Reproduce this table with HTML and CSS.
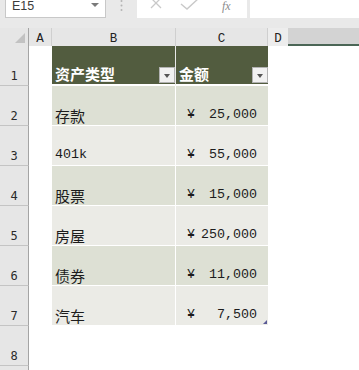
FILE: index.html
```html
<!DOCTYPE html>
<html lang="zh-CN">
<head>
<meta charset="utf-8">
<title>资产表</title>
<link rel="stylesheet" href="styles.css">
</head>
<body>
<div class="app">
  <div class="fbar">
    <div class="namebox">
      <span class="name">E15</span>
      <svg class="nb-arrow" width="8" height="5" viewBox="0 0 8 5"><path d="M0 0h8L4 4z" fill="#7a7a7a"/></svg>
    </div>
    <div class="grip">
      <svg width="3" height="14" viewBox="0 0 3 14"><circle cx="1.5" cy="2" r="1" fill="#b4b4b4"/><circle cx="1.5" cy="6.5" r="1" fill="#b4b4b4"/><circle cx="1.5" cy="11" r="1" fill="#b4b4b4"/></svg>
    </div>
    <div class="fbtns">
      <svg class="ic-x" width="12" height="12" viewBox="0 0 12 12"><path d="M1 1l10 10M11 1L1 11" stroke="#c9c9c9" stroke-width="1.3" fill="none"/></svg>
      <svg class="ic-ok" width="20" height="13" viewBox="0 0 20 13"><path d="M1 7l6 5L19 1" stroke="#c9c9c9" stroke-width="1.4" fill="none"/></svg>
      <span class="fx">fx</span>
    </div>
    <div class="finput"></div>
  </div>

  <div class="sheet">
    <div class="corner"><span class="corner-tri"></span></div>
    <div class="ch">A</div>
    <div class="ch">B</div>
    <div class="ch">C</div>
    <div class="ch ch-d">D</div>
    <div class="ch ch-sel"></div>

    <div class="rh">1</div>
    <div class="c"></div>
    <div class="c th th-b">资产类型<span class="filter"></span></div>
    <div class="c th">金额<span class="filter"></span></div>
    <div class="c"></div>
    <div class="c"></div>

    <div class="rh">2</div>
    <div class="c"></div>
    <div class="c td td-b band-a">存款</div>
    <div class="c td amt band-a"><span>¥</span><span>25,000</span></div>
    <div class="c"></div>
    <div class="c"></div>

    <div class="rh">3</div>
    <div class="c"></div>
    <div class="c td td-b band-b latin">401k</div>
    <div class="c td amt band-b"><span>¥</span><span>55,000</span></div>
    <div class="c"></div>
    <div class="c"></div>

    <div class="rh">4</div>
    <div class="c"></div>
    <div class="c td td-b band-a">股票</div>
    <div class="c td amt band-a"><span>¥</span><span>15,000</span></div>
    <div class="c"></div>
    <div class="c"></div>

    <div class="rh">5</div>
    <div class="c"></div>
    <div class="c td td-b band-b">房屋</div>
    <div class="c td amt band-b"><span>¥</span><span>250,000</span></div>
    <div class="c"></div>
    <div class="c"></div>

    <div class="rh">6</div>
    <div class="c"></div>
    <div class="c td td-b band-a">债券</div>
    <div class="c td amt band-a"><span>¥</span><span>11,000</span></div>
    <div class="c"></div>
    <div class="c"></div>

    <div class="rh">7</div>
    <div class="c"></div>
    <div class="c td td-b band-b">汽车</div>
    <div class="c td amt band-b last"><span>¥</span><span>7,500</span><span class="handle"></span></div>
    <div class="c"></div>
    <div class="c"></div>

    <div class="rh">8</div>
    <div class="c"></div>
    <div class="c"></div>
    <div class="c"></div>
    <div class="c"></div>
    <div class="c"></div>

    <div class="rh"></div>
    <div class="c"></div>
    <div class="c"></div>
    <div class="c"></div>
    <div class="c"></div>
    <div class="c"></div>
  </div>
</div>
</body>
</html>
```

FILE: styles.css
```css
html, body {
  margin: 0;
  padding: 0;
  background: #ffffff;
}

.app {
  width: 359px;
  height: 370px;
  overflow: hidden;
  font-family: "Noto Sans CJK SC", "Liberation Sans", sans-serif;
}

/* formula bar */
.fbar {
  display: flex;
  align-items: flex-start;
  height: 28px;
  padding-left: 5px;
  background: #e9e9e9;
  box-sizing: border-box;
  overflow: hidden;
}

.namebox {
  position: relative;
  width: 101px;
  height: 18px;
  box-sizing: border-box;
  background: #ffffff;
  border: 1px solid #c8c8c8;
  border-top: none;
  display: flex;
  align-items: flex-start;
}

.name {
  font-family: "Liberation Sans", sans-serif;
  font-size: 12.5px;
  line-height: 13px;
  color: #3c3c3c;
  padding: 0 0 0 6px;
}

.nb-arrow {
  position: absolute;
  right: 6px;
  top: 3px;
}

.grip {
  width: 31px;
  height: 18px;
  display: flex;
  justify-content: center;
}

.grip svg {
  margin-top: -1px;
}

.fbtns {
  width: 110px;
  height: 18px;
  background: #ffffff;
  display: flex;
  align-items: flex-start;
}

.ic-x {
  margin: -3px 0 0 13px;
}

.ic-ok {
  margin: -3px 0 0 18px;
}

.fx {
  margin: 0 0 0 22px;
  font-family: "Liberation Serif", serif;
  font-style: italic;
  font-size: 12px;
  line-height: 12px;
  color: #8c8c8c;
}

.finput {
  flex: 1;
  height: 18px;
  margin-left: 3px;
  background: #ffffff;
}

/* worksheet grid */
.sheet {
  display: grid;
  grid-template-columns: 29px 23px 124px 92px 20px 1fr;
  grid-template-rows: 18px repeat(9, 40px);
}

.corner {
  position: relative;
  background: #e6e6e6;
  border-right: 1px solid #a4a4a4;
  box-sizing: border-box;
}

.corner-tri {
  position: absolute;
  right: 3px;
  bottom: 3px;
  width: 0;
  height: 0;
  border-left: 10px solid transparent;
  border-bottom: 10px solid #c2c2c2;
}

.ch {
  background: #e6e6e6;
  border-right: 1px solid #cfcfcf;
  box-sizing: border-box;
  display: flex;
  justify-content: center;
  align-items: center;
  padding-top: 3px;
  font-family: "Liberation Mono", monospace;
  font-size: 12.5px;
  color: #222222;
}

.ch-d {
  background: #ededed;
  border-right: none;
}

.ch-sel {
  background: #d3d3d3;
  border-bottom: 2px solid #4b6656;
  border-right: none;
}

.rh {
  background: #e6e6e6;
  border-right: 1px solid #a4a4a4;
  border-bottom: 1px solid #c4c4c4;
  box-sizing: border-box;
  display: flex;
  justify-content: center;
  align-items: flex-end;
  padding-bottom: 2px;
  font-family: "DejaVu Sans Mono", monospace;
  font-size: 12px;
  line-height: 14px;
  color: #2a2a2a;
}

.c {
  background: #ffffff;
  box-sizing: border-box;
}

/* table header row */
.th {
  position: relative;
  background: #525c3f;
  border-bottom: 2px solid #ffffff;
  display: flex;
  align-items: flex-end;
  padding: 0 0 2px 3px;
  font-size: 15px;
  font-weight: 700;
  line-height: 17px;
  color: #ffffff;
}

.th-b {
  border-right: 1px solid #e8e8e8;
}

.filter {
  position: absolute;
  right: 0;
  bottom: 1px;
  width: 16px;
  height: 16px;
  box-sizing: border-box;
  background: #f1f1f1;
  border: 1px solid #b2b2b2;
}

.filter::after {
  content: "";
  position: absolute;
  left: 4px;
  top: 6px;
  border-left: 3.5px solid transparent;
  border-right: 3.5px solid transparent;
  border-top: 4px solid #555555;
}

/* table body rows */
.td {
  border-bottom: 1px solid #ffffff;
  display: flex;
  align-items: flex-end;
  padding: 0 0 1px 3px;
  font-size: 15px;
  line-height: 17px;
  color: #1c1c1c;
}

.td-b {
  border-right: 1px solid #ffffff;
}

.band-a {
  background: #dde0d4;
}

.band-b {
  background: #ebebe6;
}

.latin {
  font-family: "Liberation Mono", monospace;
  font-size: 13.33px;
  padding-bottom: 2px;
}

.amt {
  position: relative;
  justify-content: space-between;
  padding: 0 11px 2px 11px;
  font-family: "Liberation Mono", monospace;
  font-size: 13.33px;
}

.handle {
  position: absolute;
  right: 1px;
  bottom: 1px;
  width: 0;
  height: 0;
  border-left: 4px solid transparent;
  border-bottom: 4px solid #5a5a96;
}
```
